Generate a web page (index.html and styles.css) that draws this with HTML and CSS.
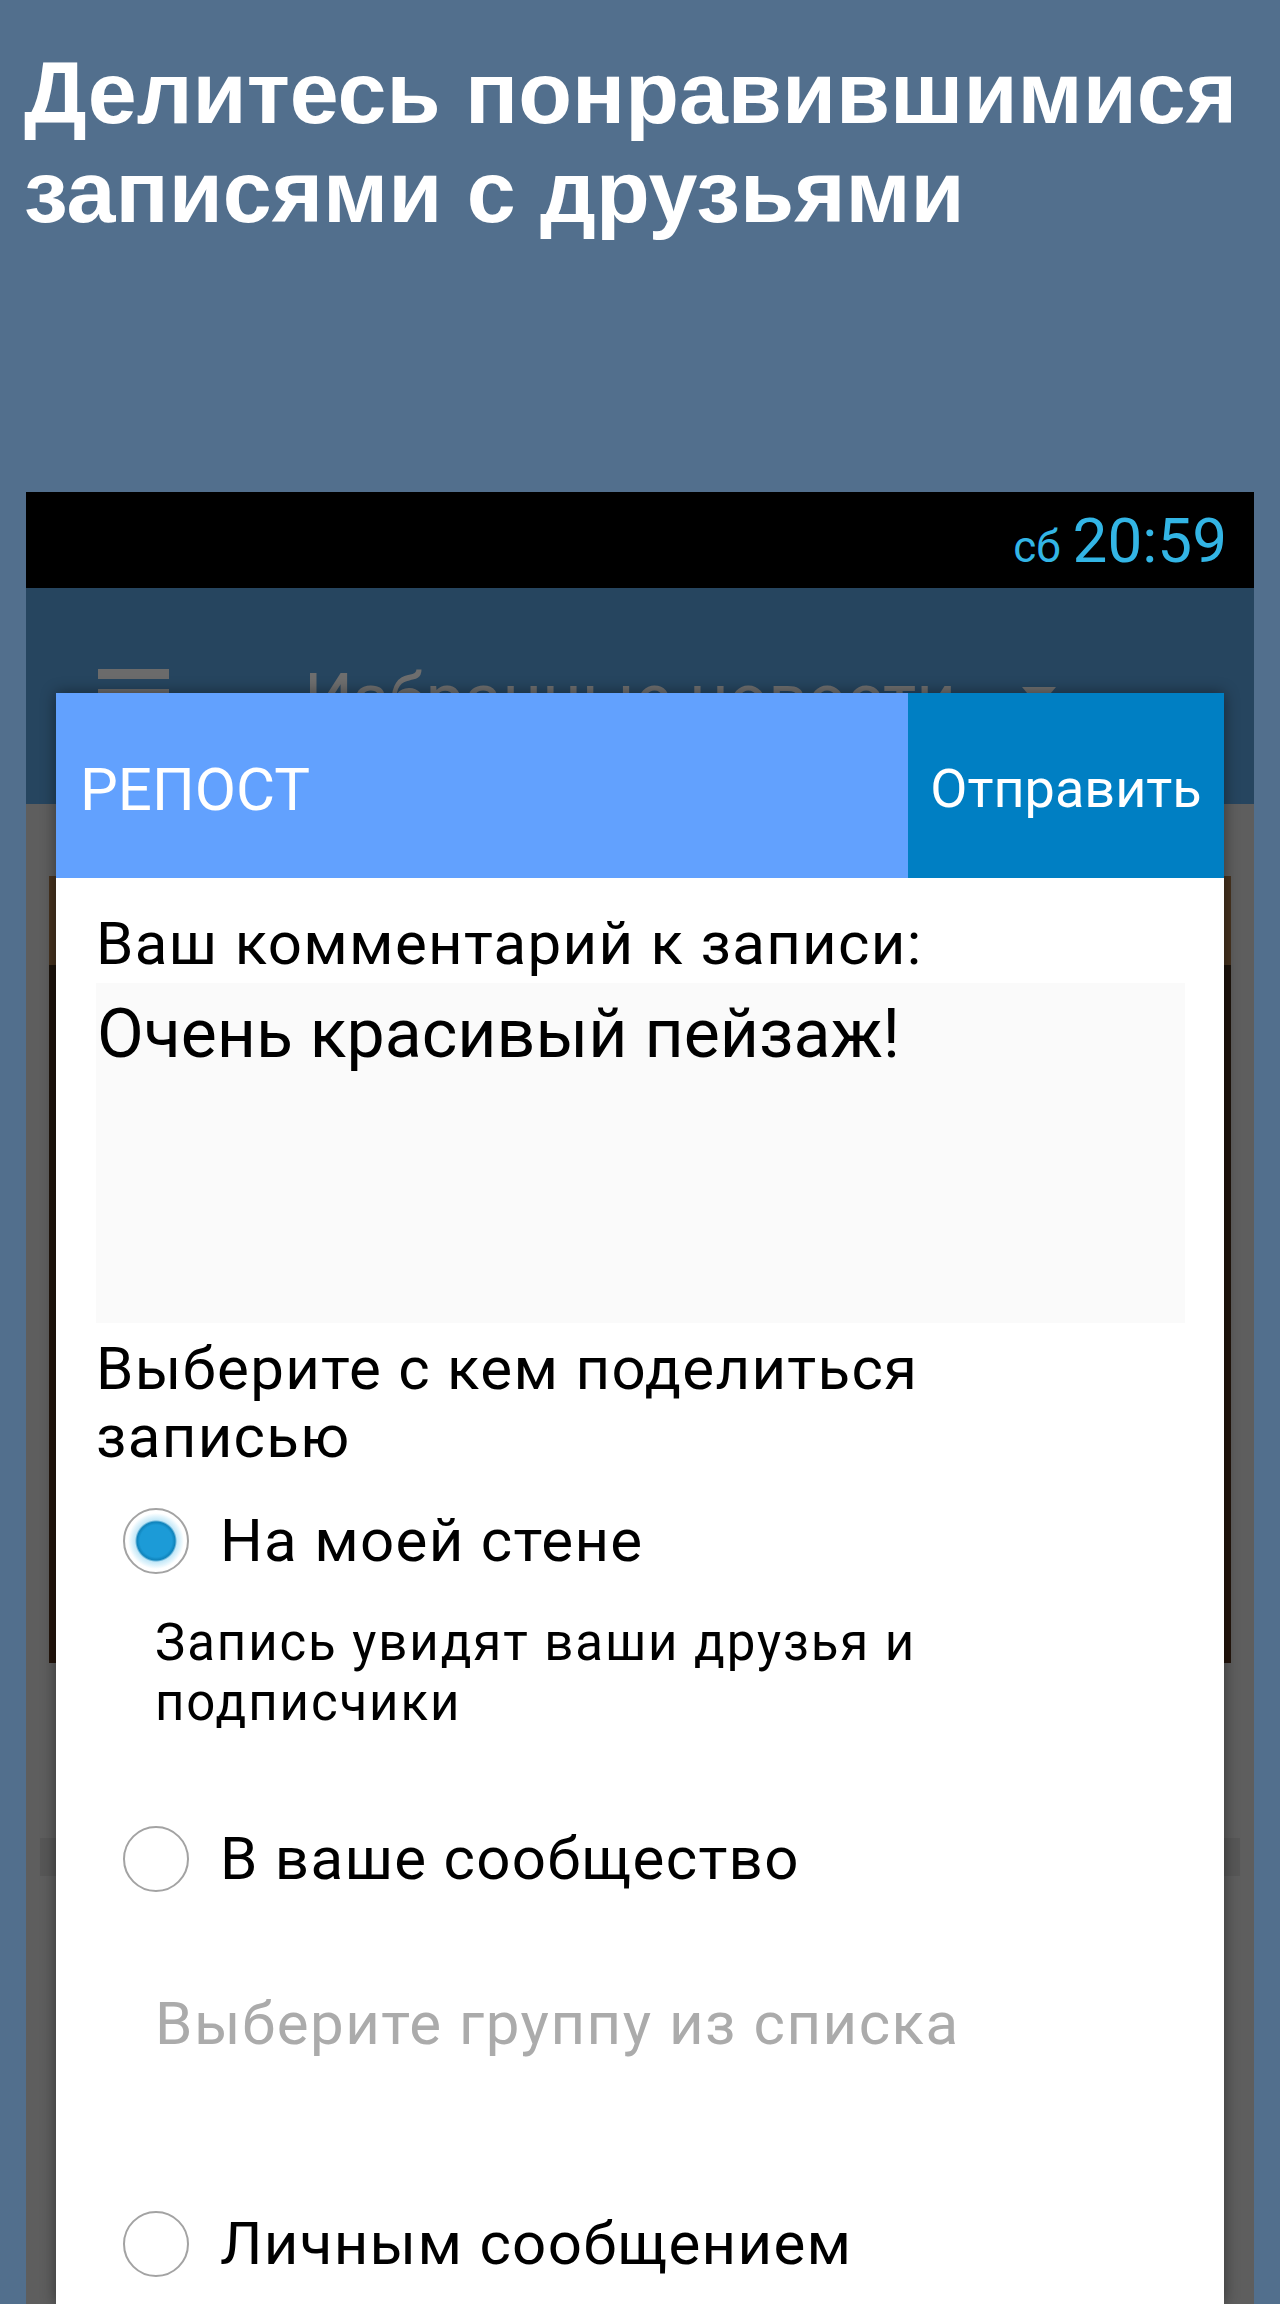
FILE: index.html
```html
<!DOCTYPE html>
<html lang="ru">
<head>
    <meta charset="UTF-8">
    <meta name="viewport" content="width=device-width, initial-scale=1.0">
    <title>Репост</title>
    <link rel="stylesheet" href="styles.css">
</head>
<body>
    <div class="promo">
        <h1>Делитесь понравившимися<br>записями с друзьями</h1>
    </div>

    <div class="phone">
        <div class="status-bar">
            <span class="day">сб</span><span class="time">20:59</span>
        </div>

        <div class="toolbar">
            <div class="hamburger"><span></span><span></span><span></span></div>
            <div class="toolbar-title">Избранные новости</div>
            <div class="caret"></div>
        </div>

        <div class="feed">
            <div class="feed-photo"></div>
            <div class="feed-bar"></div>
        </div>

        <!-- repost dialog over the feed -->
        <div class="dialog">
            <div class="dialog-head">
                <div class="dialog-title">РЕПОСТ</div>
                <div class="send-btn">Отправить</div>
            </div>

            <div class="dialog-body">
                <div class="label">Ваш комментарий к записи:</div>
                <div class="comment">Очень красивый пейзаж!</div>

                <div class="label choose">Выберите с кем поделиться<br>записью</div>

                <div class="option first">
                    <span class="radio checked"></span>
                    <span class="option-text">На моей стене</span>
                </div>
                <div class="hint">Запись увидят ваши друзья и<br>подписчики</div>

                <div class="option second">
                    <span class="radio"></span>
                    <span class="option-text">В ваше сообщество</span>
                </div>
                <div class="group-select">Выберите группу из списка</div>

                <div class="option third">
                    <span class="radio"></span>
                    <span class="option-text">Личным сообщением</span>
                </div>
            </div>
        </div>
    </div>
</body>
</html>
```

FILE: styles.css
```css
html, body {
    margin: 0;
    padding: 0;
}
body {
    background: #526f8d;
    font-family: Roboto, "Noto Sans", sans-serif;
    width: 1280px;
    height: 2304px;
    overflow: hidden;
}

.promo {
    height: 492px;
    box-sizing: border-box;
    padding: 43px 0 0 24px;
}
.promo h1 {
    margin: 0;
    font-family: "Liberation Sans", Arial, sans-serif;
    font-weight: bold;
    font-size: 88px;
    line-height: 99px;
    color: #fff;
    white-space: nowrap;
}

.phone {
    position: relative;
    margin: 0 26px;
    height: 1812px;
    background: #5e5e5e;
    overflow: hidden;
}

.status-bar {
    height: 96px;
    box-sizing: border-box;
    padding: 1px 27px 0 0;
    background: #000;
    text-align: right;
    line-height: 96px;
    color: #33b5e5;
}
.status-bar .day {
    font-size: 44px;
    margin-right: 12px;
}
.status-bar .time {
    font-size: 62px;
}

.toolbar {
    height: 216px;
    box-sizing: border-box;
    padding: 81px 0 0 72px;
    background: #26455f;
    display: flex;
    align-items: flex-start;
}
.hamburger {
    width: 71px;
    display: flex;
    flex-direction: column;
    gap: 10px;
}
.hamburger span {
    display: block;
    height: 10px;
    background: #6b6b6b;
}
.toolbar-title {
    margin: -5px 0 0 135px;
    font-size: 69px;
    line-height: 69px;
    color: #6e6e6e;
}
.caret {
    margin: 18px 0 0 66px;
    width: 0;
    height: 0;
    border-left: 17px solid transparent;
    border-right: 17px solid transparent;
    border-top: 20px solid #6e6e6e;
}

.feed {
    padding-top: 72px;
}
.feed-photo {
    margin-left: 23px;
    width: 1182px;
    height: 787px;
    background: linear-gradient(#47331f 0, #47331f 89px, #1d140c 89px, #24150c 100%);
}
.feed-bar {
    margin: 175px 0 0 14px;
    width: 1200px;
    height: 38px;
    background: #575757;
}

.dialog {
    position: absolute;
    left: 30px;
    top: 201px;
    width: 1168px;
    bottom: 0;
    background: #fff;
    box-shadow: 0 0 14px rgba(0, 0, 0, 0.45);
}

.dialog-head {
    height: 185px;
    display: flex;
    color: #fff;
}
.dialog-title {
    flex: 1;
    background: #62a1fe;
    padding: 8px 0 0 24px;
    font-size: 60px;
    display: flex;
    align-items: center;
}
.send-btn {
    width: 316px;
    box-sizing: border-box;
    padding-top: 5px;
    background: #007fc3;
    font-size: 54px;
    display: flex;
    align-items: center;
    justify-content: center;
}

.dialog-body {
    padding: 32px 39px 0 40px;
    color: #000;
}
.label {
    font-size: 60px;
    line-height: 68px;
    letter-spacing: 1.3px;
}
.comment {
    margin-top: 5px;
    height: 340px;
    box-sizing: border-box;
    padding: 11px 0 0 1px;
    background: #fafafa;
    font-size: 68px;
    line-height: 80px;
}
.choose {
    margin-top: 12px;
}

.option {
    display: flex;
    align-items: center;
    font-size: 60px;
    line-height: 68px;
    letter-spacing: 1.3px;
}
.option.first {
    margin-top: 36px;
}
.option.second {
    margin-top: 92px;
}
.option.third {
    margin-top: 152px;
}
.radio {
    margin: 0 31px 0 27px;
    width: 66px;
    height: 66px;
    box-sizing: border-box;
    border: 2px solid #a3a3a3;
    border-radius: 50%;
    background: #fff;
}
.radio.checked {
    background: radial-gradient(circle, #1c9bd7 0, #1c9bd7 16px, #0f83bb 19px, #c4e8f8 21px, #e4f5fc 25px, #fff 28px);
}

.hint {
    margin: 38px 0 0 59px;
    font-size: 51px;
    line-height: 60px;
    letter-spacing: 1.9px;
}
.group-select {
    margin: 97px 0 0 59px;
    font-size: 60px;
    line-height: 68px;
    letter-spacing: 1.5px;
    color: #ababab;
}
```
